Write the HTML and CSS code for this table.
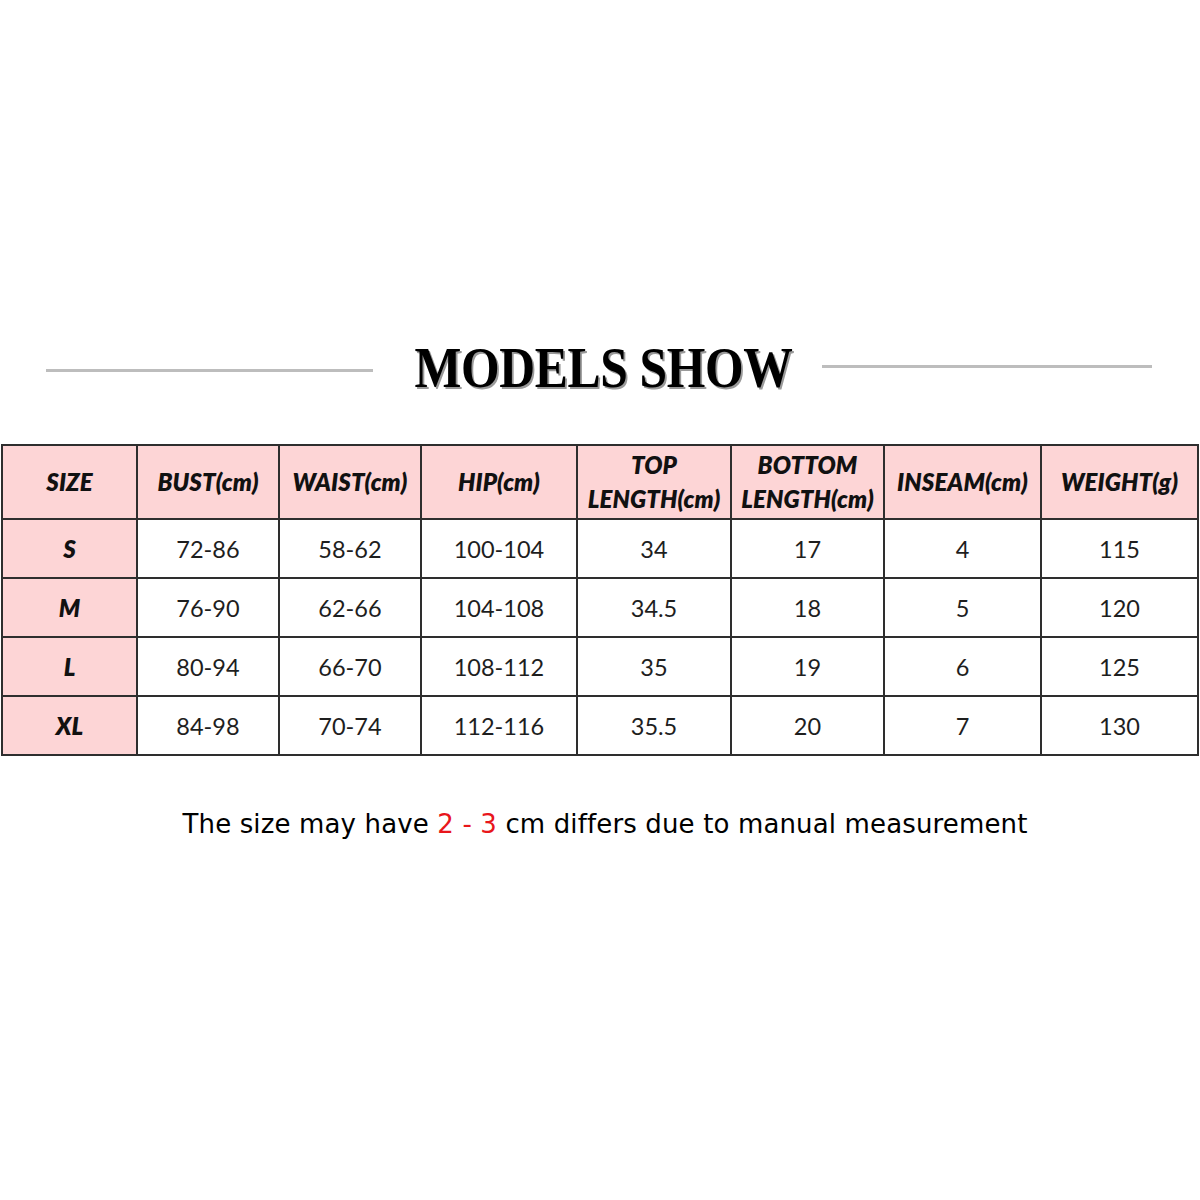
FILE: index.html
```html
<!DOCTYPE html>
<html lang="en">
<head>
<meta charset="utf-8">
<title>Size chart</title>
<link rel="stylesheet" href="styles.css">
</head>
<body>
<div class="page">
  <div class="title-row">
    <div class="rule rule-left"></div>
    <h1 class="title">MODELS SHOW</h1>
    <div class="rule rule-right"></div>
  </div>

  <table class="chart">
    <colgroup>
      <col class="c1"><col class="c2"><col class="c3"><col class="c4">
      <col class="c5"><col class="c6"><col class="c7"><col class="c8">
    </colgroup>
    <thead>
      <tr>
        <th>SIZE</th>
        <th>BUST(cm)</th>
        <th>WAIST(cm)</th>
        <th>HIP(cm)</th>
        <th>TOP<br>LENGTH(cm)</th>
        <th>BOTTOM<br>LENGTH(cm)</th>
        <th>INSEAM(cm)</th>
        <th>WEIGHT(g)</th>
      </tr>
    </thead>
    <tbody>
      <tr><th>S</th><td>72-86</td><td>58-62</td><td>100-104</td><td>34</td><td>17</td><td>4</td><td>115</td></tr>
      <tr><th>M</th><td>76-90</td><td>62-66</td><td>104-108</td><td>34.5</td><td>18</td><td>5</td><td>120</td></tr>
      <tr><th>L</th><td>80-94</td><td>66-70</td><td>108-112</td><td>35</td><td>19</td><td>6</td><td>125</td></tr>
      <tr><th>XL</th><td>84-98</td><td>70-74</td><td>112-116</td><td>35.5</td><td>20</td><td>7</td><td>130</td></tr>
    </tbody>
  </table>

  <p class="note">The size may have <span class="red">2 - 3</span> cm differs due to manual measurement</p>
</div>
</body>
</html>
```

FILE: styles.css
```css
html, body {
  margin: 0;
  padding: 0;
  background: #ffffff;
}

.page {
  width: 1200px;
  padding-top: 338px;
}

.title-row {
  display: flex;
  align-items: center;
  height: 60px;
}

.rule {
  height: 3px;
  background: #bdbdbd;
}

.rule-left {
  width: 327px;
  margin-left: 46px;
  margin-top: 4px;
}

.rule-right {
  width: 330px;
  margin-top: -4px;
}

.title {
  margin: 0;
  width: 449px;
  text-align: center;
  font-family: "Liberation Serif", "Times New Roman", serif;
  font-weight: bold;
  font-size: 58px;
  line-height: 60px;
  color: #000;
  letter-spacing: -0.4px;
  text-shadow: 2px 2px 0 #9a9a9a;
  transform: translateX(6px) scaleX(0.855);
}

.chart {
  margin-top: 46px;
  margin-left: 1px;
  width: 1198px;
  border-collapse: collapse;
  table-layout: fixed;
  font-family: Lato, "Open Sans", sans-serif;
  color: #1e1e1e;
}

.c1 { width: 135px; }
.c2 { width: 142px; }
.c3 { width: 142px; }
.c4 { width: 156px; }
.c5 { width: 154px; }
.c6 { width: 153px; }
.c7 { width: 157px; }
.c8 { width: 157px; }

.chart th,
.chart td {
  border: 2px solid #2e2e2e;
  text-align: center;
  padding: 0;
}

.chart thead th {
  height: 72px;
  background: #fdd5d6;
  font-weight: 800;
  font-style: italic;
  font-size: 24px;
  line-height: 34px;
  letter-spacing: 0.1px;
  color: #111;
}

.chart tbody th {
  background: #fdd5d6;
  font-weight: 800;
  font-style: italic;
  font-size: 24px;
  color: #111;
}

.chart tbody td,
.chart tbody th {
  height: 57px;
}

.chart tbody td {
  font-size: 23.5px;
  font-weight: normal;
}

.note {
  margin: 51px 0 0 0;
  padding-left: 10px;
  text-align: center;
  font-family: "DejaVu Sans", sans-serif;
  font-size: 26px;
  line-height: 34px;
  letter-spacing: 0.14px;
  color: #000;
}

.red {
  color: #e8161b;
}
```
